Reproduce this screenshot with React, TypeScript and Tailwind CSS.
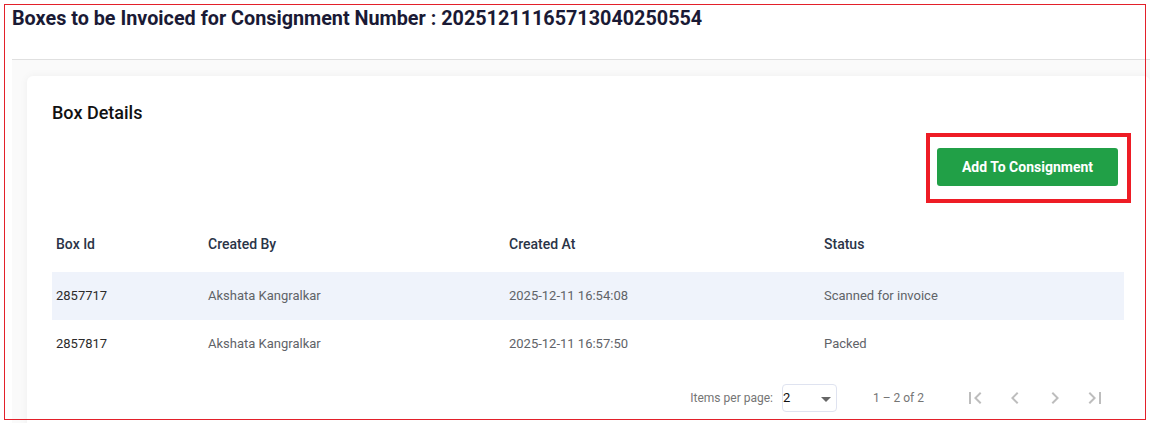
import React from "react";

const rows = [
  { id: "2857717", by: "Akshata Kangralkar", at: "2025-12-11 16:54:08", status: "Scanned for invoice" },
  { id: "2857817", by: "Akshata Kangralkar", at: "2025-12-11 16:57:50", status: "Packed" },
];

function Icon({ d }: { d: string }) {
  return (
    <svg width="24" height="24" viewBox="0 0 24 24" fill="#bdbdbd">
      <path d={d} />
    </svg>
  );
}

export default function App() {
  return (
    <div
      className="relative w-[1150px] h-[423px] overflow-hidden bg-white"
      style={{ fontFamily: "Roboto, 'Noto Sans', Arial, sans-serif" }}
    >
      {/* Header */}
      <div className="h-[59px] pl-3 pt-[5px]">
        <h1 className="text-[19.8px] leading-[28px] font-bold text-[#1a1a35]">
          Boxes to be Invoiced for Consignment Number : 20251211165713040250554
        </h1>
      </div>
      <div className="ml-3 border-t border-[#e0e0e0]" />

      {/* Body */}
      <div className="ml-3 pl-[15px] pt-[16px] bg-[#fafafa] h-[400px]">
        <div className="bg-white rounded-[6px] shadow-[0_0_8px_rgba(0,0,0,0.05)] h-[400px] pl-[25px] pr-[26px] pt-[25px]">
          <div className="text-[18px] leading-[24px] font-medium text-[#111]">Box Details</div>

          <div className="flex justify-end mt-[8px] mr-[-7px]">
            <div className="border-[4px] border-[#ee1c25] pl-[7px] pr-[9px] pt-[11px] pb-[13px]">
              <button className="w-[181px] h-[38px] rounded-[3px] bg-[#21a047] text-white text-[14px] font-bold">
                Add To Consignment
              </button>
            </div>
          </div>

          <div className="mt-[13px]">
            <div className="flex h-[56px] items-center text-[14px] font-medium text-[#2a3447]">
              <div className="w-[156px] pl-[4px]">Box Id</div>
              <div className="w-[301px]">Created By</div>
              <div className="w-[315px]">Created At</div>
              <div className="flex-1">Status</div>
            </div>
            {rows.map((r, i) => (
              <div
                key={r.id}
                className={`flex h-[48px] items-center text-[13px] ${i === 0 ? "bg-[#eff3fb]" : "bg-white"}`}
              >
                <div className="w-[156px] pl-[4px] text-[#2b2b2b]">{r.id}</div>
                <div className="w-[301px] text-[#5f6368]">{r.by}</div>
                <div className="w-[315px] text-[#5f6368]">{r.at}</div>
                <div className="flex-1 text-[#5f6368]">{r.status}</div>
              </div>
            ))}
          </div>

          {/* Paginator */}
          <div className="flex items-center justify-end h-[60px] pr-[9px]">
            <span className="text-[12px] text-[#757575] mr-[9px]">Items per page:</span>
            <div className="relative w-[55px] h-[28px] border border-[#dfe3f0] rounded-[4px] flex items-center">
              <span className="text-[13px] text-[#111]">2</span>
              <span className="absolute right-[5px] top-[12px] w-0 h-0 border-l-[5px] border-r-[5px] border-t-[5px] border-l-transparent border-r-transparent border-t-[#666]" />
            </div>
            <span className="text-[12px] text-[#757575] ml-[36px] mr-[31px]">1 – 2 of 2</span>
            <div className="flex">
              <div className="w-[40px] h-[40px] flex items-center justify-center">
                <Icon d="M18.41 16.59L13.82 12l4.59-4.59L17 6l-6 6 6 6zM6 6h2v12H6z" />
              </div>
              <div className="w-[40px] h-[40px] flex items-center justify-center">
                <Icon d="M15.41 7.41L14 6l-6 6 6 6 1.41-1.41L10.83 12z" />
              </div>
              <div className="w-[40px] h-[40px] flex items-center justify-center">
                <Icon d="M10 6L8.59 7.41 13.17 12l-4.58 4.59L10 18l6-6z" />
              </div>
              <div className="w-[40px] h-[40px] flex items-center justify-center">
                <Icon d="M5.59 7.41L10.18 12l-4.59 4.59L7 18l6-6-6-6zM16 6h2v12h-2z" />
              </div>
            </div>
          </div>
        </div>
      </div>

      {/* annotation frame */}
      <div className="absolute left-[4px] top-[4px] w-[1142px] h-[416px] border border-[#e3202a] pointer-events-none" />
    </div>
  );
}
